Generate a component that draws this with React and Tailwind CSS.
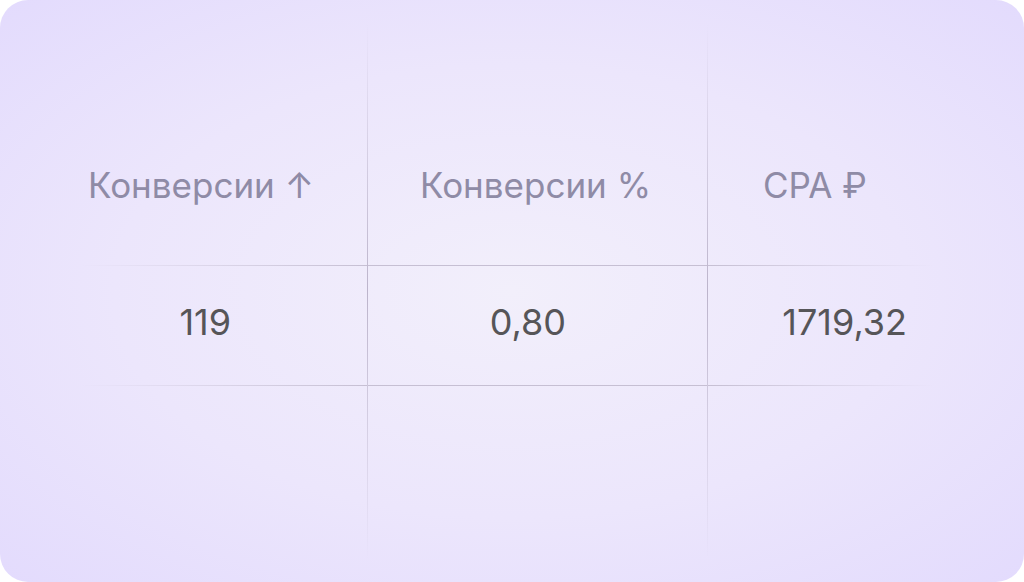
const columns = [
    { title: 'Конверсии ↑', value: '119' },
    { title: 'Конверсии %', value: '0,80' },
    { title: 'CPA ₽', value: '1719,32' },
];

function Divider() {
    return (
        <div className="w-px self-stretch my-[22px] bg-linear-to-b from-transparent via-[#bcb4cb] to-transparent" />
    );
}

export default function App() {
    return (
        <div className="w-[1024px] h-[582px] bg-white font-['Inter','Liberation_Sans',sans-serif]">
            <div className="w-full h-full rounded-[28px] overflow-hidden flex bg-[radial-gradient(ellipse_at_center,#f2effb_0%,#ece6fc_55%,#e3dbfd_100%)]">
                {/* Column 1 */}
                <div className="w-[367px] flex flex-col">
                    <div className="h-[265px] flex items-end pb-[62px] pl-[88px]">
                        <span className="text-[35px] leading-none text-[#8f8ba6]">{columns[0].title}</span>
                    </div>
                    <div className="h-px ml-[80px] bg-linear-to-r from-transparent to-[#c6bfd3]" />
                    <div className="h-[119px] flex items-center justify-end pb-[8px] pr-[136px]">
                        <span className="text-[36px] leading-none text-[#565558]">{columns[0].value}</span>
                    </div>
                    <div className="h-px ml-[80px] bg-linear-to-r from-transparent to-[#c6bfd3]" />
                </div>

                <Divider />

                {/* Column 2 */}
                <div className="w-[339px] flex flex-col">
                    <div className="h-[265px] flex items-end pb-[62px] pl-[52px]">
                        <span className="text-[35px] leading-none text-[#8f8ba6]">{columns[1].title}</span>
                    </div>
                    <div className="h-px bg-[#c6bfd3]" />
                    <div className="h-[119px] flex items-center justify-end pb-[8px] pr-[141px]">
                        <span className="text-[36px] leading-none text-[#565558]">{columns[1].value}</span>
                    </div>
                    <div className="h-px bg-[#c6bfd3]" />
                </div>

                <Divider />

                {/* Column 3 */}
                <div className="flex-1 flex flex-col">
                    <div className="h-[265px] flex items-end pb-[62px] pl-[55px]">
                        <span className="text-[35px] leading-none text-[#8f8ba6]">{columns[2].title}</span>
                    </div>
                    <div className="h-px mr-[90px] bg-linear-to-l from-transparent to-[#c6bfd3]" />
                    <div className="h-[119px] flex items-center justify-end pb-[8px] pr-[117px]">
                        <span className="text-[36px] leading-none text-[#565558]">{columns[2].value}</span>
                    </div>
                    <div className="h-px mr-[90px] bg-linear-to-l from-transparent to-[#c6bfd3]" />
                </div>
            </div>
        </div>
    );
}
